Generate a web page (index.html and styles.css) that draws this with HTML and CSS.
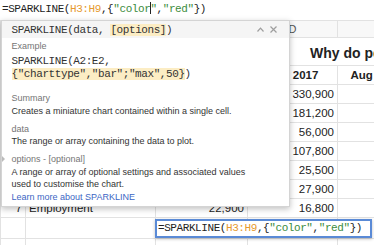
FILE: index.html
```html
<!DOCTYPE html>
<html lang="en">

<head>
    <meta charset="UTF-8">
    <meta name="viewport" content="width=device-width, initial-scale=1.0">
    <title>SPARKLINE help</title>
    <link rel="stylesheet" href="styles.css">
</head>

<body>
    <div class="formula-bar">=SPARKLINE(<span class="range">H3:H9</span>,{<span class="str">"color</span><span class="caret"></span><span class="str">"</span>,<span class="str">"red"</span>})</div>

    <table class="sheet">
        <colgroup>
            <col class="col-a">
            <col class="col-b">
            <col class="col-c">
            <col class="col-d">
            <col class="col-e">
        </colgroup>
        <tr class="head-row"><td>A</td><td>B</td><td>C</td><td>D</td><td></td></tr>
        <tr class="title-row"><td></td><td></td><td></td><td colspan="2" class="title">Why do people quit?</td></tr>
        <tr class="month-row"><td></td><td></td><td></td><td>July 2017</td><td>Aug 2017</td></tr>
        <tr><td></td><td></td><td></td><td class="num">330,900</td><td></td></tr>
        <tr><td></td><td></td><td></td><td class="num">181,200</td><td></td></tr>
        <tr><td></td><td></td><td></td><td class="num">56,000</td><td></td></tr>
        <tr><td></td><td></td><td></td><td class="num">107,800</td><td></td></tr>
        <tr><td></td><td></td><td></td><td class="num">25,500</td><td></td></tr>
        <tr><td></td><td></td><td></td><td class="num">27,900</td><td></td></tr>
        <tr><td class="num">7</td><td>Employment</td><td class="num">22,900</td><td class="num">16,800</td><td></td></tr>
        <tr>
            <td></td><td></td>
            <td class="edit-cell">
                <div class="edit">=SPARKLINE(<span class="range">H3:H9</span>,{<span class="str">"color"</span>,<span class="str">"red"</span>})</div>
            </td>
            <td></td><td></td>
        </tr>
        <tr><td></td><td></td><td></td><td></td><td></td></tr>
    </table>

    <div class="help">
        <div class="help-head">
            <span class="sig">SPARKLINE(data, <span class="opt">[options]</span>)</span>
            <svg width="7" height="5" viewBox="0 0 7 5"><path d="M0.5 4.5 L3.5 1.2 L6.5 4.5" fill="none" stroke="#9e9e9e" stroke-width="1.2"/></svg>
            <svg width="7" height="7" viewBox="0 0 7 7"><path d="M0.5 0.5 L6.5 6.5 M6.5 0.5 L0.5 6.5" stroke="#9e9e9e" stroke-width="1.2"/></svg>
        </div>
        <div class="help-body">
            <div class="label">Example</div>
            <div class="code">
                <div>SPARKLINE(A2:E2,</div>
                <div><span class="opt">{"charttype","bar";"max",50}</span>)</div>
            </div>

            <div class="label section first">Summary</div>
            <div class="text">Creates a miniature chart contained within a single cell.</div>

            <div class="label section">data</div>
            <div class="text">The range or array containing the data to plot.</div>

            <div class="label section more">options - [optional]</div>
            <div class="text">A range or array of optional settings and associated values<br>used to customise the chart.</div>

            <a class="link" href="#">Learn more about SPARKLINE</a>
        </div>
    </div>
</body>

</html>
```

FILE: styles.css
```css
body {
    position: relative;
    width: 374px;
    height: 245px;
    margin: 0;
    overflow: hidden;
    background-color: #fff;
    font-family: Arial, "Liberation Sans", sans-serif;
    color: #222;
}

.formula-bar {
    height: 20px;
    padding-left: 2px;
    font-family: "Liberation Mono", monospace;
    font-size: 11px;
    letter-spacing: -0.42px;
    line-height: 18px;
    white-space: nowrap;
}

.range {
    color: #e69a2e;
}

.str {
    color: #3c8c3c;
}

.caret {
    display: inline-block;
    width: 1px;
    height: 12px;
    margin-right: -1px;
    background-color: #222;
    vertical-align: -2px;
}

/* sheet grid */

.sheet {
    table-layout: fixed;
    width: 414px;
    border-collapse: collapse;
    font-size: 11.5px;
}

.col-a { width: 25px; }
.col-b { width: 130px; }
.col-c { width: 92px; }
.col-d { width: 90px; }
.col-e { width: 77px; }

.sheet tr {
    height: 19px;
}

.sheet td {
    padding: 0 3px;
    border: 1px solid #e2e2e2;
    white-space: nowrap;
    overflow: hidden;
}

.sheet .head-row {
    height: 17px;
}

.head-row td {
    background-color: #f8f8f8;
    color: #555;
    font-size: 11px;
    text-align: center;
}

.sheet .title-row {
    height: 28px;
}

.sheet .title {
    padding: 0 0 4px 62px;
    vertical-align: bottom;
    font-size: 14px;
    font-weight: bold;
    line-height: 16px;
}

.month-row td {
    font-weight: bold;
    text-align: center;
}

.sheet .num {
    text-align: right;
}

.sheet .edit-cell {
    overflow: visible;
    padding: 0;
    vertical-align: top;
}

.edit {
    position: relative;
    z-index: 1;
    width: 217px;
    height: 19px;
    box-sizing: border-box;
    margin: 1px 0 0 -1px;
    padding-left: 1px;
    border: 2px solid #5a8ad6;
    background-color: #fff;
    box-shadow: 0 1px 3px rgba(0, 0, 0, 0.25);
    font-family: "Liberation Mono", monospace;
    font-size: 11px;
    letter-spacing: -0.42px;
    line-height: 15px;
    color: #222;
}

/* function help popup */

.help {
    position: absolute;
    top: 20px;
    left: 1px;
    width: 289px;
    height: 187px;
    box-sizing: border-box;
    border: 1px solid #d4d4d4;
    background-color: #fff;
    box-shadow: 0 2px 6px rgba(0, 0, 0, 0.25);
}

.help-head {
    display: flex;
    align-items: center;
    height: 17px;
    padding: 0 12px 0 9.5px;
    background-color: #f5f5f5;
    font-family: "Liberation Mono", monospace;
    font-size: 11px;
    letter-spacing: -0.42px;
    color: #333;
}

.help-head .sig {
    flex: 1;
}

.help-head svg {
    margin-left: 6px;
}

.opt {
    background-color: #fcedc4;
}

.help-body {
    padding: 2px 10px 0 9.5px;
    font-size: 9px;
    color: #333;
}

.label {
    line-height: 12.5px;
    color: #757575;
}

.code {
    margin-top: 2.5px;
    font-family: "Liberation Mono", monospace;
    font-size: 11px;
    letter-spacing: -0.42px;
    line-height: 13px;
    color: #333;
}

.text {
    line-height: 12.5px;
}

.section {
    margin-top: 5.5px;
}

.section.first {
    margin-top: 11px;
}

.more::before {
    content: "";
    display: inline-block;
    margin: 0 7px 0 -10px;
    border-left: 3px solid #bbb;
    border-top: 3px solid transparent;
    border-bottom: 3px solid transparent;
}

.link {
    display: block;
    line-height: 12.5px;
    color: #3c66c4;
    text-decoration: none;
}
```
